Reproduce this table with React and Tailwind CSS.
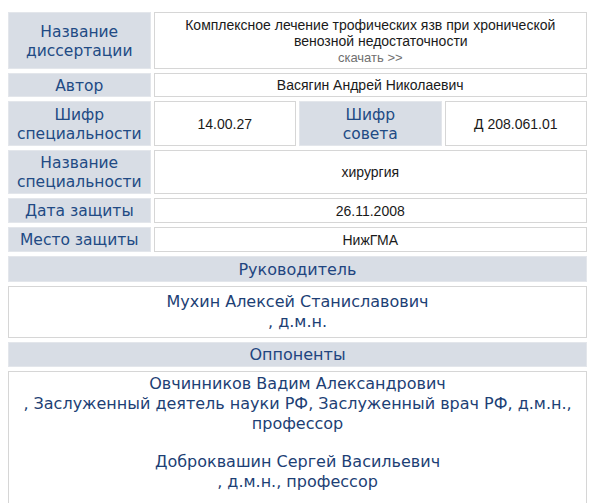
import React from "react";

const label =
  "flex flex-col items-center justify-center text-center bg-[#d8dde5] border border-[#e3e6eb] text-[#214a84] text-[15.5px] leading-[19px] pt-[2px] font-['DejaVu_Sans',sans-serif]";
const value =
  "flex flex-col items-center justify-center text-center bg-white border border-[#d6d6d6] text-[#1a1a1a] text-[14px] leading-[16px] font-['Liberation_Sans',Arial,sans-serif]";
const header =
  "flex items-center justify-center bg-[#d8dde5] border border-[#e3e6eb] text-[#1f4580] text-[16px] pt-[1px] font-['DejaVu_Sans',sans-serif]";
const names =
  "flex flex-col items-center text-center bg-white border border-[#d6d6d6] text-[#1d3f75] text-[16px] leading-[20px] font-['DejaVu_Sans',sans-serif]";

export default function App() {
  return (
    <div className="w-[600px] h-[503px] bg-white overflow-hidden pt-[12px] pl-[8px]">
      <div className="w-[579px] flex flex-col gap-[4px]">
        <div className="grid grid-cols-4 gap-x-[3px] h-[57px]">
          <div className={label}>
            <span>Название</span>
            <span>диссертации</span>
          </div>
          <div className={value + " col-span-3 justify-start pt-[4px]"}>
            <span>Комплексное лечение трофических язв при хронической</span>
            <span className="pl-[21px]">венозной недостаточности</span>
            <span className="text-[#707070] text-[13px] leading-[17px]">скачать &gt;&gt;</span>
          </div>
        </div>

        <div className="grid grid-cols-4 gap-x-[3px] h-[24px]">
          <div className={label}>Автор</div>
          <div className={value + " col-span-3"}>Васягин Андрей Николаевич</div>
        </div>

        <div className="grid grid-cols-4 gap-x-[3px] h-[45px]">
          <div className={label}>
            <span>Шифр</span>
            <span>специальности</span>
          </div>
          <div className={value}>14.00.27</div>
          <div className={label}>
            <span>Шифр</span>
            <span>совета</span>
          </div>
          <div className={value}>Д 208.061.01</div>
        </div>

        <div className="grid grid-cols-4 gap-x-[3px] h-[44px]">
          <div className={label}>
            <span>Название</span>
            <span>специальности</span>
          </div>
          <div className={value + " col-span-3"}>хирургия</div>
        </div>

        <div className="grid grid-cols-4 gap-x-[3px] h-[25px]">
          <div className={label}>Дата защиты</div>
          <div className={value + " col-span-3"}>26.11.2008</div>
        </div>

        <div className="grid grid-cols-4 gap-x-[3px] h-[25px]">
          <div className={label}>Место защиты</div>
          <div className={value + " col-span-3"}>НижГМА</div>
        </div>

        <div className={header + " h-[26px]"}>Руководитель</div>

        <div className={names + " h-[52px] justify-center"}>
          <span>Мухин Алексей Станиславович</span>
          <span>, д.м.н.</span>
        </div>

        <div className={header + " h-[25px]"}>Оппоненты</div>

        <div className={names + " h-[150px] pt-[2px]"}>
          <span>Овчинников Вадим Александрович</span>
          <span>, Заслуженный деятель науки РФ, Заслуженный врач РФ, д.м.н.,</span>
          <span>профессор</span>
          <span className="h-[18px]"></span>
          <span>Доброквашин Сергей Васильевич</span>
          <span>, д.м.н., профессор</span>
        </div>
      </div>
    </div>
  );
}
